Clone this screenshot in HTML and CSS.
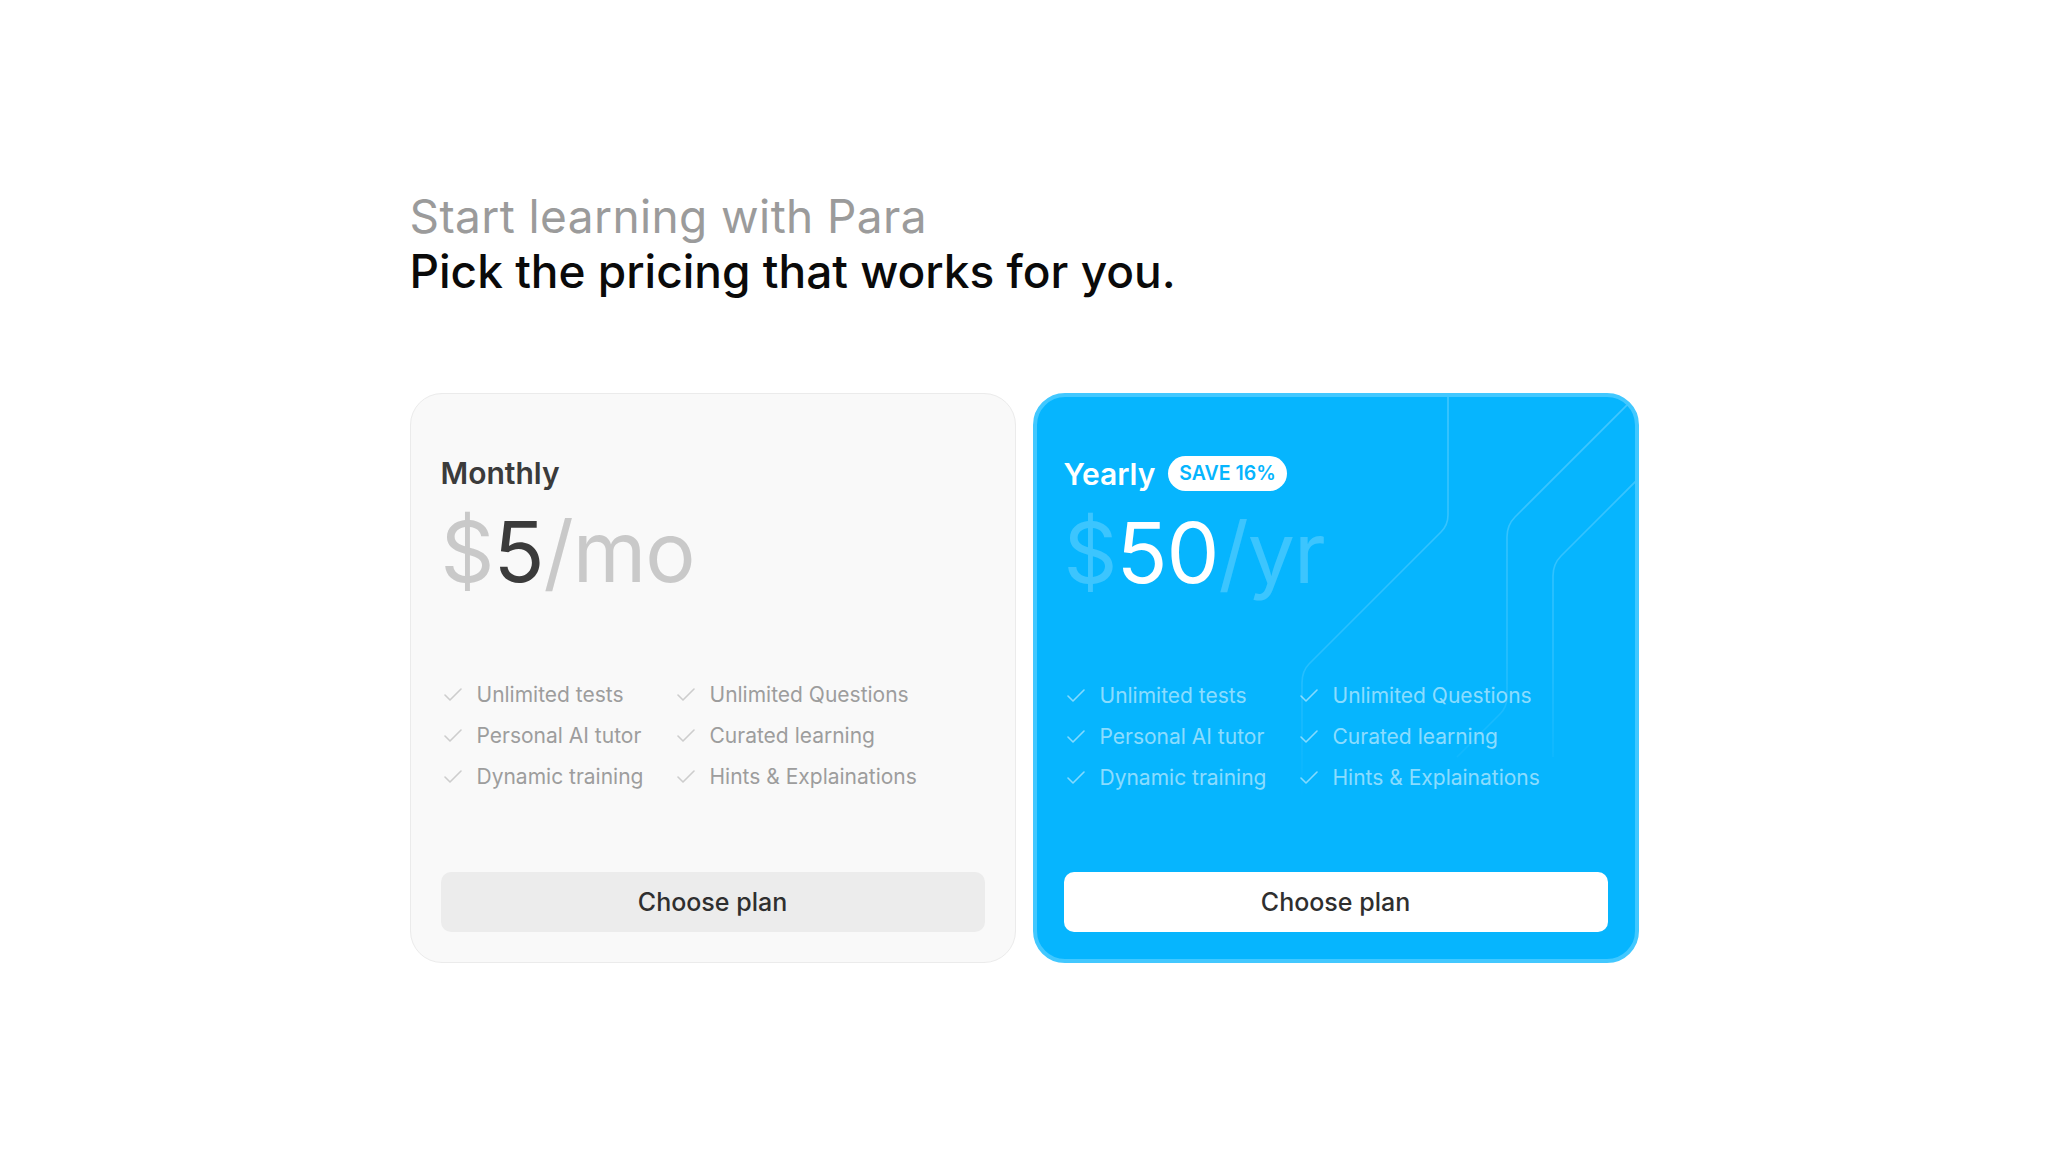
FILE: index.html
```html
<!DOCTYPE html>
<html lang="en">
<head>
  <meta charset="UTF-8">
  <meta name="viewport" content="width=device-width, initial-scale=1.0">
  <title>Para Pricing</title>
  <link rel="stylesheet" href="styles.css">
</head>
<body>
  <main class="pricing">
    <header class="pricing-head">
      <p class="kicker">Start learning with Para</p>
      <h1>Pick the pricing that works for you.</h1>
    </header>

    <div class="plans">
      <section class="plan">
        <h2 class="plan-name">Monthly</h2>
        <p class="price"><span class="dim">$</span>5<span class="dim">/mo</span></p>
        <ul class="features">
          <li><svg class="check" viewBox="0 0 20 14"><path d="M2 7l5 5L18 1"/></svg>Unlimited tests</li>
          <li><svg class="check" viewBox="0 0 20 14"><path d="M2 7l5 5L18 1"/></svg>Unlimited Questions</li>
          <li><svg class="check" viewBox="0 0 20 14"><path d="M2 7l5 5L18 1"/></svg>Personal AI tutor</li>
          <li><svg class="check" viewBox="0 0 20 14"><path d="M2 7l5 5L18 1"/></svg>Curated learning</li>
          <li><svg class="check" viewBox="0 0 20 14"><path d="M2 7l5 5L18 1"/></svg>Dynamic training</li>
          <li><svg class="check" viewBox="0 0 20 14"><path d="M2 7l5 5L18 1"/></svg>Hints &amp; Explainations</li>
        </ul>
        <button class="choose">Choose plan</button>
      </section>

      <section class="plan plan-featured">
        <!-- circuit traces behind the yearly card -->
        <svg class="traces" viewBox="0 0 598 562" preserveAspectRatio="none">
          <defs>
            <linearGradient id="traceFade" gradientUnits="userSpaceOnUse" x1="0" y1="0" x2="0" y2="400">
              <stop offset="0" stop-color="#fff" stop-opacity="0.24"/>
              <stop offset="0.65" stop-color="#fff" stop-opacity="0.14"/>
              <stop offset="1" stop-color="#fff" stop-opacity="0"/>
            </linearGradient>
          </defs>
          <path d="M411 0V118Q411 128 404 135L272 267Q265 274 265 286V400"/>
          <path d="M598 0L478 120Q470 128 470 140V300Q470 310 463 317L420 360"/>
          <path d="M604 79L524 159Q516 167 516 179V360"/>
        </svg>
        <h2 class="plan-name">Yearly <span class="badge">SAVE 16%</span></h2>
        <p class="price"><span class="dim">$</span>50<span class="dim">/yr</span></p>
        <ul class="features">
          <li><svg class="check" viewBox="0 0 20 14"><path d="M2 7l5 5L18 1"/></svg>Unlimited tests</li>
          <li><svg class="check" viewBox="0 0 20 14"><path d="M2 7l5 5L18 1"/></svg>Unlimited Questions</li>
          <li><svg class="check" viewBox="0 0 20 14"><path d="M2 7l5 5L18 1"/></svg>Personal AI tutor</li>
          <li><svg class="check" viewBox="0 0 20 14"><path d="M2 7l5 5L18 1"/></svg>Curated learning</li>
          <li><svg class="check" viewBox="0 0 20 14"><path d="M2 7l5 5L18 1"/></svg>Dynamic training</li>
          <li><svg class="check" viewBox="0 0 20 14"><path d="M2 7l5 5L18 1"/></svg>Hints &amp; Explainations</li>
        </ul>
        <button class="choose">Choose plan</button>
      </section>
    </div>
  </main>
</body>
</html>
```

FILE: styles.css
```css
body {
  margin: 0;
  background: #fff;
  font-family: Inter, "Noto Sans", sans-serif;
  color: #111;
}
.pricing {
  width: 1229px;
  margin: 0 auto;
  padding-top: 189px;
}
.pricing-head {
  font-size: 46px;
  line-height: 55px;
}
.kicker {
  margin: 0;
  color: #9b9b9b;
  font-weight: 400;
  letter-spacing: 0.4px;
}
h1 {
  margin: 0;
  font-size: inherit;
  font-weight: 500;
  color: #0a0a0a;
}
.plans {
  display: grid;
  grid-template-columns: 1fr 1fr;
  gap: 17px;
  margin-top: 94px;
}
.plan {
  position: relative;
  overflow: hidden;
  box-sizing: border-box;
  height: 570px;
  display: flex;
  flex-direction: column;
  padding: 62px 30px 30px;
  background: #f9f9f9;
  border: 1px solid #ebebeb;
  border-radius: 32px;
}
.plan > * {
  position: relative;
}
.plan-featured {
  padding: 59px 27px 27px;
  background: #06b5fe;
  border: 4px solid #42c8ff;
}
.traces {
  position: absolute;
  inset: 0;
  width: 100%;
  height: 100%;
}
.traces path {
  fill: none;
  stroke: url(#traceFade);
  stroke-width: 1.6;
}
.plan-name {
  display: flex;
  align-items: center;
  gap: 13px;
  margin: 0;
  font-size: 30px;
  line-height: 34px;
  font-weight: 600;
  color: #3b3b3b;
}
.plan-featured .plan-name {
  color: #fff;
}
.badge {
  height: 35px;
  padding: 0 11px;
  border-radius: 18px;
  background: #fff;
  color: #06b5fe;
  font-size: 19.5px;
  line-height: 35px;
  font-weight: 600;
}
.price {
  margin: 20px 0 0;
  font-size: 84px;
  line-height: 84px;
  letter-spacing: -1px;
  color: #3b3b3b;
}
.price .dim {
  color: #c9c9c9;
}
.plan-featured .price {
  color: #fff;
}
.plan-featured .price .dim {
  color: rgba(255, 255, 255, 0.22);
}
.features {
  display: grid;
  grid-template-columns: 233px auto;
  row-gap: 11px;
  margin: 86px 0 0;
  padding: 0;
  list-style: none;
  font-size: 21px;
  line-height: 30px;
  color: #9d9d9d;
}
.features li {
  display: flex;
  align-items: center;
  gap: 14px;
}
.check {
  width: 20px;
  height: 14px;
  margin-left: 2px;
  fill: none;
  stroke: #cdcdcd;
  stroke-width: 1.6;
  stroke-linecap: round;
  stroke-linejoin: round;
}
.plan-featured .features {
  color: rgba(255, 255, 255, 0.55);
}
.plan-featured .check {
  stroke: rgba(255, 255, 255, 0.5);
}
.choose {
  margin-top: auto;
  height: 60px;
  width: 100%;
  border: none;
  border-radius: 10px;
  background: #ececec;
  color: #2f2f2f;
  font-family: inherit;
  font-size: 25px;
  font-weight: 500;
}
.plan-featured .choose {
  background: #fff;
}
```
